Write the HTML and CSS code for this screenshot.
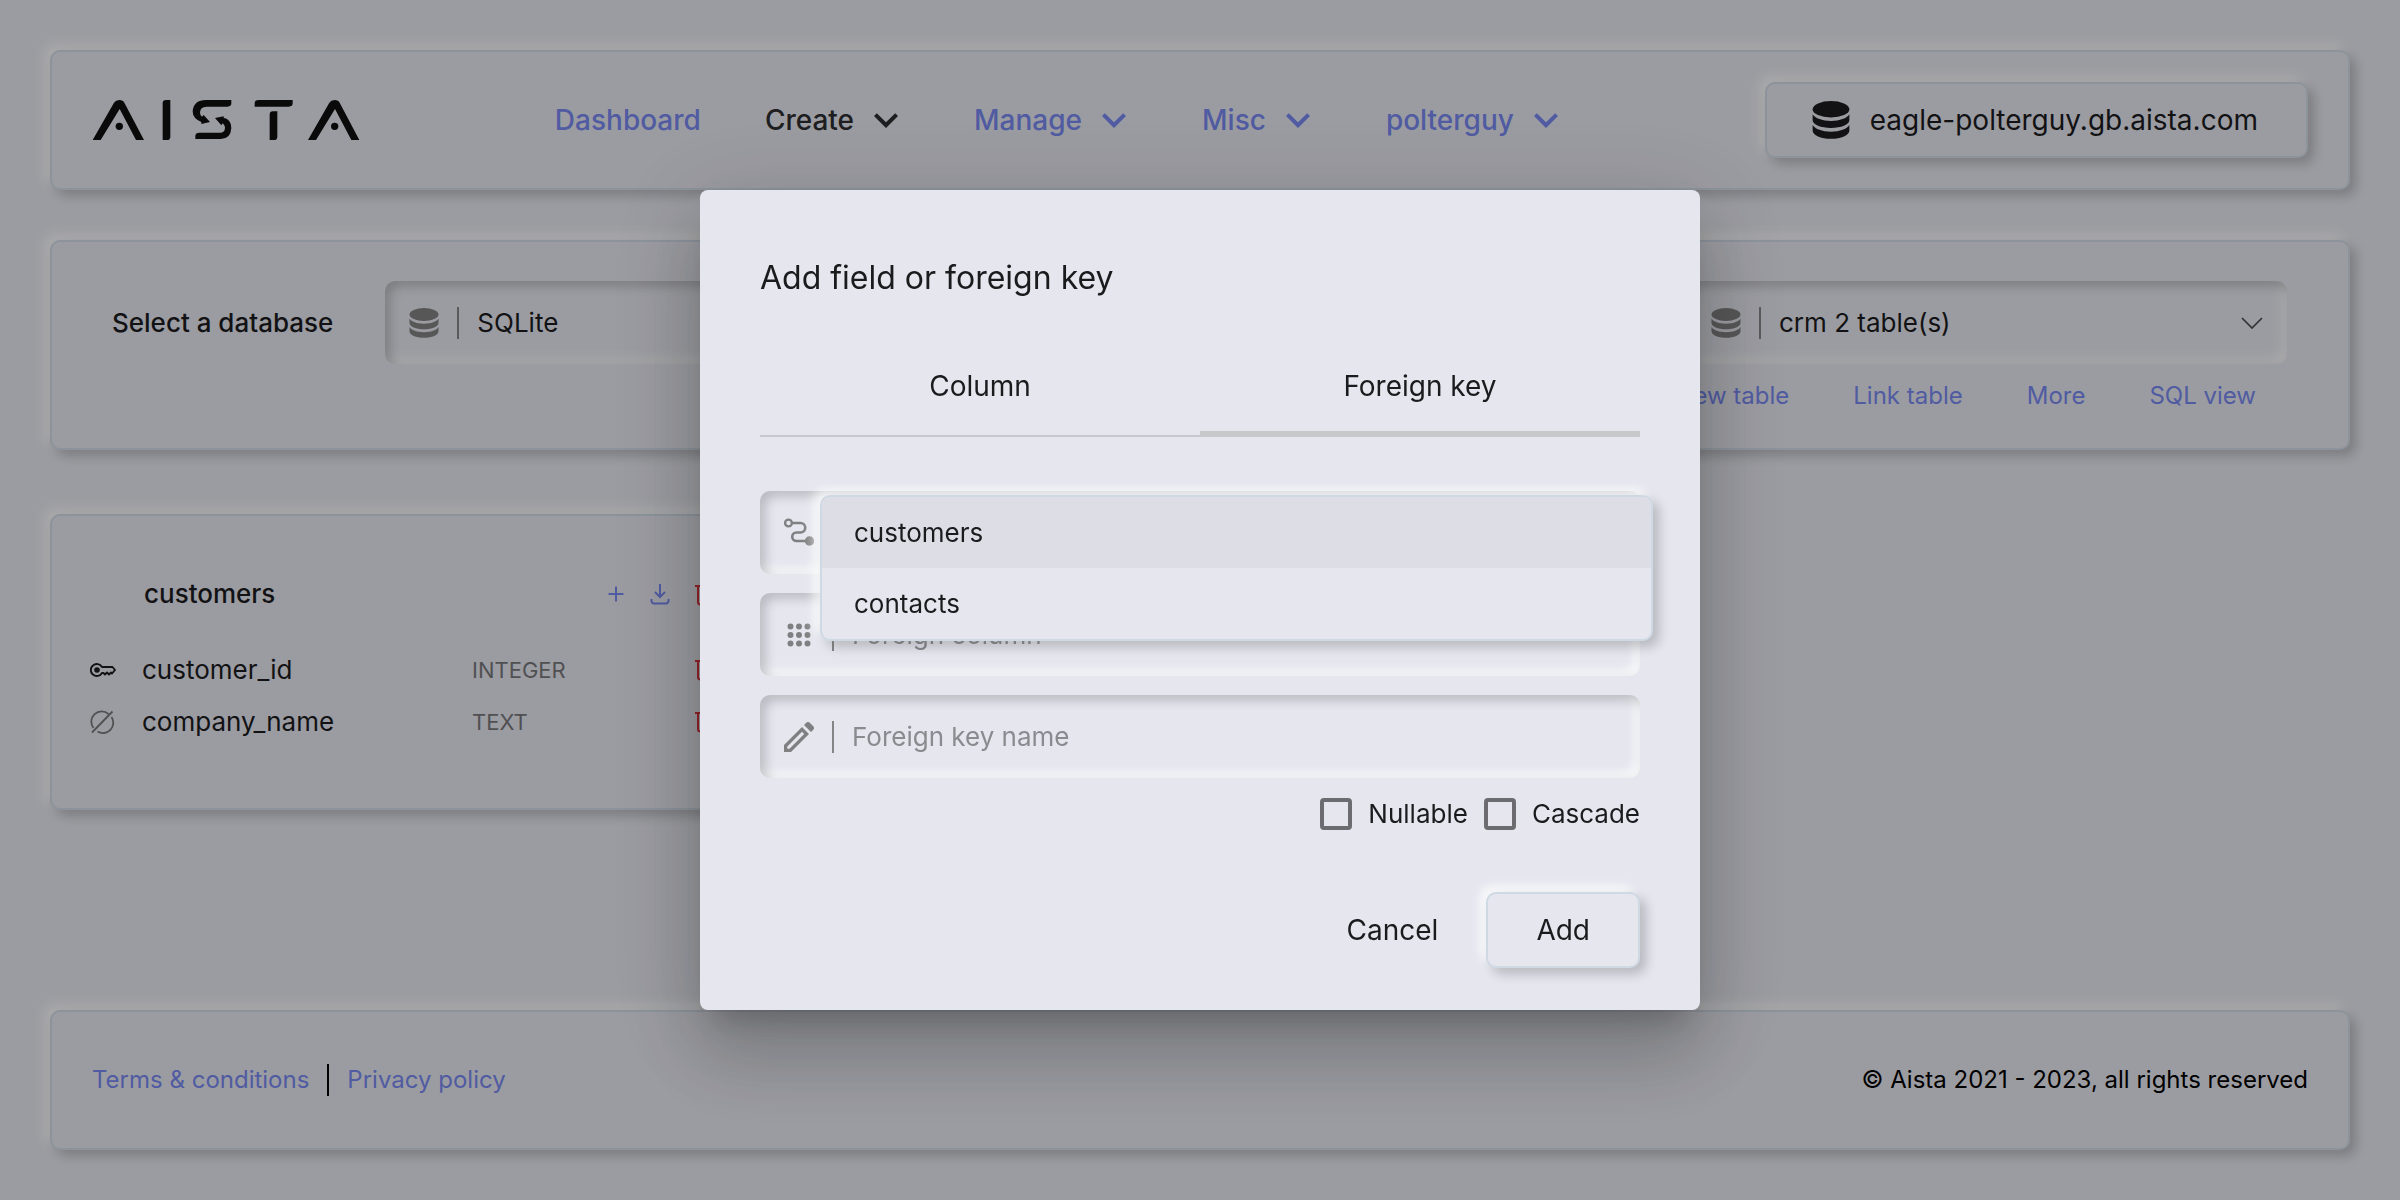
FILE: index.html
```html
<!DOCTYPE html>
<html lang="en">
<head>
<meta charset="utf-8">
<meta name="viewport" content="width=device-width, initial-scale=1">
<title>Aista - SQL Studio</title>
<link rel="stylesheet" href="styles.css">
</head>
<body>
<svg class="sprite" aria-hidden="true">
  <symbol id="database" viewBox="0 0 30 30">
    <ellipse cx="15" cy="6.500" rx="14.500" ry="6.500"/>
    <path d="M.5 10.500c2 3.300 7.500 5.200 14.500 5.200s12.500-1.900 14.500-5.200V15c0 3.600-6.500 6.300-14.500 6.300S.5 18.600.5 15z"/>
    <path d="M.5 19c2 3.300 7.500 5.200 14.500 5.200S27.500 22.300 29.500 19v4.200c0 3.800-6.500 6.600-14.500 6.600S.5 27 .5 23.200z"/>
  </symbol>
  <symbol id="expand" viewBox="0 0 24 24"><path d="M7.410 8.590 12 13.170l4.590-4.580L18 10l-6 6-6-6z"/></symbol>
  <symbol id="chevron" viewBox="0 0 22 12"><path d="M1 1l10 10L21 1" fill="none" stroke="currentColor" stroke-width="1.700"/></symbol>
  <symbol id="trash" viewBox="0 0 28 28"><path d="M5 6h18M11 6V3.500h6V6M8 6v16a2.500 2.500 0 0 0 2.500 2.500h7a2.500 2.500 0 0 0 2.500-2.500V6" fill="none" stroke="currentColor" stroke-width="2"/></symbol>
</svg>

<header class="card topbar">
  <a class="logo" href="#" aria-label="Aista">
    <svg viewBox="0 0 800 120" aria-hidden="true">
      <g id="peak"><path d="M0 120 64 8Q69 0 80 0T95 8L154 120H130L81 27 24 120z"/><circle cx="80" cy="79" r="11"/></g>
      <path d="M210 10Q210 0 220 0H233V110Q233 120 223 120H210z"/>
      <path d="M416 0V10Q416 20 404 20H342Q322 20 322 38 322 45 328 50L333 45 352 66 326 72V66Q300 56 300 34 303 0 340 0z"/>
      <path d="M308 117V108Q308 98 320 98H384Q397 98 397 82 397 76 390 70L386 76 367 54 393 49V53Q416 58 416 84 414 117 384 117z"/>
      <path d="M486 20V10Q486 0 498 0H600V10Q600 20 588 20zM531 120V44Q531 34 541 34H554V110Q554 120 544 120z"/>
      <use href="#peak" x="646"/>
    </svg>
  </a>
  <nav class="menu">
    <a href="#">Dashboard</a>
    <a class="current" href="#">Create <svg class="arrow"><use href="#expand"/></svg></a>
    <a href="#">Manage <svg class="arrow"><use href="#expand"/></svg></a>
    <a href="#">Misc <svg class="arrow"><use href="#expand"/></svg></a>
    <a href="#">polterguy <svg class="arrow"><use href="#expand"/></svg></a>
  </nav>
  <button class="raised backend" type="button"><svg><use href="#database"/></svg>eagle-polterguy.gb.aista.com</button>
</header>

<main class="content">
  <section class="card picker">
    <div class="picker-row">
      <label class="picker-label" for="engine">Select a database</label>
      <div class="field">
        <svg class="field-icon"><use href="#database"/></svg><span class="divider"></span>
        <select id="engine"><option>SQLite</option></select>
        <svg class="chevron"><use href="#chevron"/></svg>
      </div>
      <div class="field last">
        <svg class="field-icon"><use href="#database"/></svg><span class="divider"></span>
        <select id="catalog" aria-label="Database"><option>crm 2 table(s)</option></select>
        <svg class="chevron"><use href="#chevron"/></svg>
      </div>
    </div>
    <div class="links">
      <a href="#">New table</a><a href="#">Link table</a><a href="#">More</a><a href="#">SQL view</a>
    </div>
  </section>

  <div class="tables">
    <section class="card table-card">
      <div class="table-head">
        <h2>customers</h2>
        <div class="actions">
          <button type="button" aria-label="Add field"><svg viewBox="0 0 28 28"><path d="M14 6.500v15M6.500 14h15" fill="none" stroke="currentColor" stroke-width="2"/></svg></button>
          <button type="button" aria-label="Export"><svg viewBox="0 0 28 28"><path d="M14 4v13M9 12l5 5 5-5M5.500 19v2a2.500 2.500 0 0 0 2.500 2.500h12a2.500 2.500 0 0 0 2.500-2.500v-2" fill="none" stroke="currentColor" stroke-width="2"/></svg></button>
          <button class="danger" type="button" aria-label="Drop table"><svg><use href="#trash"/></svg></button>
        </div>
      </div>
      <table>
        <tr>
          <td class="kind key"><svg viewBox="0 0 26 14"><path d="M12 4A6 6 0 1 0 12 10h1.500l1.500 1.500 2-2 2 2 2-2 1 1L25 7l-2.500-3z" fill="none" stroke="currentColor" stroke-width="1.900" stroke-linejoin="round"/><circle cx="7" cy="7" r="2.800"/></svg></td>
          <td class="name">customer_id</td><td class="type">INTEGER</td>
          <td class="drop"><button class="danger" type="button" aria-label="Drop customer_id"><svg><use href="#trash"/></svg></button></td>
        </tr>
        <tr>
          <td class="kind"><svg viewBox="0 0 26 24"><g fill="none" stroke="currentColor" stroke-width="1.800"><path d="M3.500 18A10.300 10.300 0 0 1 18.500 4M21.500 7A10.300 10.300 0 0 1 7.500 21.500M2 22.500 22.500 1.500"/></g></svg></td>
          <td class="name">company_name</td><td class="type">TEXT</td>
          <td class="drop"><button class="danger" type="button" aria-label="Drop company_name"><svg><use href="#trash"/></svg></button></td>
        </tr>
      </table>
    </section>
  </div>
</main>

<footer class="card footer">
  <div class="legal"><a href="#">Terms &amp; conditions</a><span class="divider"></span><a href="#">Privacy policy</a></div>
  <p>© Aista 2021 - 2023, all rights reserved</p>
</footer>

<div class="backdrop">
  <form class="dialog" role="dialog" aria-modal="true" aria-labelledby="dialog-title">
    <h1 id="dialog-title">Add field or foreign key</h1>
    <div class="tabs" role="tablist">
      <button type="button" role="tab" aria-selected="false">Column</button>
      <button type="button" role="tab" aria-selected="true">Foreign key</button>
    </div>
    <div class="fields">
      <div class="field">
        <svg class="field-icon" viewBox="0 0 30 30"><path d="M8 5h8.500a4.750 4.750 0 0 1 0 9.500h-4a4.250 4.250 0 0 0 0 8.500H24" fill="none" stroke="currentColor" stroke-width="2.600"/><circle cx="4.500" cy="5" r="3.400" fill="none" stroke="currentColor" stroke-width="2.400"/><circle cx="25.500" cy="23" r="4.700"/></svg>
        <span class="divider"></span>
        <select class="empty" aria-label="Foreign table"><option></option><option>customers</option><option>contacts</option></select>
        <ul class="options" role="listbox">
          <li class="active" role="option">customers</li>
          <li role="option">contacts</li>
        </ul>
      </div>
      <div class="field">
        <svg class="field-icon" viewBox="0 0 30 30"><path d="M6.500 6.500h0M15 6.500h0M23.500 6.500h0M6.500 15h0M15 15h0M23.500 15h0M6.500 23.500h0M15 23.500h0M23.500 23.500h0" stroke="currentColor" stroke-width="6" stroke-linecap="round"/></svg>
        <span class="divider"></span>
        <select class="empty" aria-label="Foreign column"><option>Foreign column</option></select>
      </div>
      <div class="field">
        <svg class="field-icon" viewBox="0 0 30 30"><path fill-rule="evenodd" d="M0 30V23L18 5l7 7L7 30zM3.300 26.700h2.200L20.200 12 18 9.800 3.300 24.500z"/><path d="M20 3l2.300-2.300q1.500-1.500 3.500 0l3.500 3.500q1.500 2 0 3.500L27 10z"/></svg>
        <span class="divider"></span>
        <input type="text" placeholder="Foreign key name" aria-label="Foreign key name">
      </div>
    </div>
    <div class="checks">
      <label><input type="checkbox">Nullable</label>
      <label><input type="checkbox">Cascade</label>
    </div>
    <div class="buttons">
      <button class="flat" type="button">Cancel</button>
      <button class="raised" type="submit">Add</button>
    </div>
  </form>
</div>
</body>
</html>
```
FILE: styles.css
```css
:root {
  --surface: #e5e6ee;
  --edge: #cfd9e4;
  --text: #1b1b1e;
  --link: #7686ee;
  --raised: 6px 6px 12px rgba(0, 0, 0, .2), -6px -6px 12px rgba(255, 255, 255, .8);
  --sunken: inset 5px 5px 12px rgba(0, 0, 0, .2), inset -5px -5px 12px rgba(255, 255, 255, .8);
}
* { box-sizing: border-box; }
body {
  margin: 0;
  min-height: 100vh;
  padding: 50px;
  display: flex;
  flex-direction: column;
  background: var(--surface);
  color: var(--text);
  font: 26px/32px Inter, "Liberation Sans", sans-serif;
}
h1, h2, p, ul { margin: 0; padding: 0; }
a { color: var(--link); text-decoration: none; }
button, input, select { font: inherit; color: inherit; background: none; border: 0; padding: 0; margin: 0; }
svg { fill: currentColor; flex: none; display: block; }
.sprite { position: absolute; width: 0; height: 0; }

.card {
  border: 2px solid var(--edge);
  border-radius: 10px;
  background: var(--surface);
  box-shadow: var(--raised);
}
.raised {
  height: 76px;
  padding: 0 48px;
  border: 2px solid var(--edge);
  border-radius: 10px;
  background: var(--surface);
  box-shadow: var(--raised);
  font-size: 28px;
}
.divider { width: 2px; height: 32px; background: currentColor; flex: none; }

.topbar { display: flex; align-items: center; justify-content: space-between; height: 140px; padding: 0 40px; }
.logo { color: #0f0f10; }
.logo svg { width: 268px; height: 40px; }
.menu { display: flex; gap: 64px; font-size: 28px; font-weight: 500; }
.menu a { display: flex; align-items: center; gap: 8px; }
.menu .current { color: #2d2d30; }
.arrow { width: 48px; height: 48px; }
.backend { display: flex; align-items: center; gap: 20px; padding: 0 48px 0 45px; }
.backend svg { width: 38px; height: 38px; }

.content { padding: 50px 0; }
.picker { padding: 39px 61px 20px 60px; }
.picker-row { display: flex; align-items: center; }
.picker-label { font-weight: 500; margin-right: 52px; }
.field {
  position: relative;
  display: flex;
  align-items: center;
  gap: 18px;
  height: 83px;
  padding: 0 24px;
  border-radius: 10px;
  box-shadow: var(--sunken);
}
.picker .field { width: 600px; }
.picker .last { margin-left: auto; }
.field-icon { width: 30px; height: 30px; color: #808082; }
.field .divider { background: #858587; }
.field select, .field input { flex: 1; min-width: 0; height: 48px; appearance: none; outline: 0; }
.chevron { width: 22px; height: 12px; color: #4c4c50; }
.links { display: flex; justify-content: flex-end; gap: 64px; padding: 0 31px; line-height: 64px; font-size: 24px; }

.tables { display: grid; grid-template-columns: repeat(3, 1fr); gap: 40px; padding-top: 64px; }
.table-card { padding: 44px 70px 60px 38px; }
.table-head { display: flex; align-items: center; justify-content: space-between; height: 68px; margin-bottom: 16px; padding-left: 54px; }
.table-head h2 { font-size: 26px; font-weight: 500; }
.actions { display: flex; gap: 16px; color: var(--link); }
.actions svg, .drop svg { width: 28px; height: 28px; }
.danger { color: #d8343c; }
table { width: 100%; border-collapse: collapse; table-layout: fixed; }
td { height: 52px; padding: 0; }
.kind { width: 52px; color: #77777b; }
.kind svg { width: 26px; height: 24px; }
.key { color: var(--text); }
.name { width: 330px; }
.type { color: #77777b; font-size: 22px; }
.drop { width: 28px; }
.drop svg { margin-top: 4px; }

.footer { display: flex; align-items: center; justify-content: space-between; height: 140px; margin-top: auto; padding: 0 40px; font-size: 24px; color: #000; }
.legal { display: flex; align-items: center; gap: 18px; }

.backdrop {
  position: fixed;
  inset: 0;
  display: flex;
  align-items: center;
  justify-content: center;
  background: rgba(0, 0, 0, .32);
}
.dialog {
  width: 1000px;
  max-width: 90%;
  padding: 64px 60px 42px;
  border-radius: 8px;
  background: var(--surface);
  box-shadow: 0 22px 30px -14px rgba(0, 0, 0, .2), 0 48px 76px 6px rgba(0, 0, 0, .14), 0 18px 92px 16px rgba(0, 0, 0, .12);
}
.dialog h1 { font-size: 32px; font-weight: 400; line-height: 48px; }
.tabs { display: flex; margin-top: 39px; border-bottom: 2px solid #c8c9d0; }
.tabs button { flex: 1; height: 96px; margin-bottom: -2px; font-size: 28px; border-bottom: 6px solid transparent; }
.tabs [aria-selected="true"] { border-color: #c7c8c9; }
.fields { display: grid; gap: 19px; margin-top: 54px; }
.empty, .field input::placeholder { color: #8b8b8f; opacity: 1; }
.options {
  position: absolute;
  z-index: 1;
  top: 4px;
  left: 60px;
  right: -13px;
  list-style: none;
  overflow: hidden;
  border: 2px solid var(--edge);
  border-radius: 10px;
  background: var(--surface);
  box-shadow: var(--raised);
}
.options li { padding: 0 32px; line-height: 71px; }
.options .active { background: #dcdde5; }
.checks { display: flex; justify-content: flex-end; gap: 16px; margin-top: 20px; }
.checks label { display: flex; align-items: center; gap: 16px; }
.checks input { appearance: none; width: 32px; height: 32px; border: 4px solid #6c6c70; border-radius: 4px; }
.buttons { display: flex; justify-content: flex-end; gap: 48px; margin-top: 62px; }
.flat { font-size: 28px; }
```
